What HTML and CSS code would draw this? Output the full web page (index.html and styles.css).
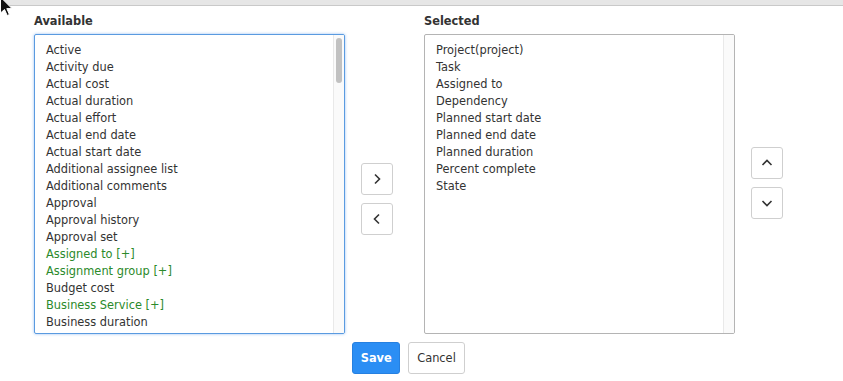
FILE: index.html
```html
<!DOCTYPE html>
<html>
  <head>
    <title>Column picker</title>
    <link rel="stylesheet" href="styles.css">
  </head>
  <body>
    <div class="topbar"></div>
    <svg class="cursor" width="14" height="18" viewBox="0 0 14 18">
      <path d="M0.5 -3 L0.5 13 L4.5 9.5 L7.2 15.5 L9.4 14.5 L6.8 8.6 L12 8.6 Z" fill="#111" stroke="#fff" stroke-width="1"/>
    </svg>

    <div class="picker">
      <div class="lists">
        <div class="column">
          <div class="label">Available</div>
          <div class="listbox focused">
            <div class="items">
              <div class="item">Active</div>
              <div class="item">Activity due</div>
              <div class="item">Actual cost</div>
              <div class="item">Actual duration</div>
              <div class="item">Actual effort</div>
              <div class="item">Actual end date</div>
              <div class="item">Actual start date</div>
              <div class="item">Additional assignee list</div>
              <div class="item">Additional comments</div>
              <div class="item">Approval</div>
              <div class="item">Approval history</div>
              <div class="item">Approval set</div>
              <div class="item ref">Assigned to [+]</div>
              <div class="item ref">Assignment group [+]</div>
              <div class="item">Budget cost</div>
              <div class="item ref">Business Service [+]</div>
              <div class="item">Business duration</div>
            </div>
            <div class="scrollbar">
              <div class="thumb"></div>
            </div>
          </div>
        </div>

        <div class="movers">
          <button class="icon-btn" title="Add">
            <svg width="12" height="12" viewBox="0 0 12 12"><path d="M4 1.5 L8.5 6 L4 10.5" /></svg>
          </button>
          <button class="icon-btn" title="Remove">
            <svg width="12" height="12" viewBox="0 0 12 12"><path d="M8 1.5 L3.5 6 L8 10.5" /></svg>
          </button>
        </div>

        <div class="column">
          <div class="label">Selected</div>
          <div class="listbox">
            <div class="items">
              <div class="item">Project(project)</div>
              <div class="item">Task</div>
              <div class="item">Assigned to</div>
              <div class="item">Dependency</div>
              <div class="item">Planned start date</div>
              <div class="item">Planned end date</div>
              <div class="item">Planned duration</div>
              <div class="item">Percent complete</div>
              <div class="item">State</div>
            </div>
            <div class="scrollbar"></div>
          </div>
        </div>

        <div class="order">
          <button class="icon-btn" title="Move up">
            <svg width="12" height="12" viewBox="0 0 12 12"><path d="M1.5 8 L6 3.5 L10.5 8" /></svg>
          </button>
          <button class="icon-btn" title="Move down">
            <svg width="12" height="12" viewBox="0 0 12 12"><path d="M1.5 4 L6 8.5 L10.5 4" /></svg>
          </button>
        </div>
      </div>

      <div class="actions">
        <button class="btn primary">Save</button>
        <button class="btn">Cancel</button>
      </div>
    </div>
  </body>
</html>
```

FILE: styles.css
```css
body {
  margin: 0;
  font-family: "DejaVu Sans", Verdana, sans-serif;
  font-size: 11.4px;
  color: #333;
  background-color: #fff;
}

.topbar {
  height: 5px;
  background-color: #e6e6e6;
  border-bottom: 1px solid #c9c9c9;
}

.cursor {
  position: absolute;
  left: 0;
  top: 0;
}

.picker {
  display: inline-flex;
  flex-direction: column;
  margin-left: 34px;
  margin-top: 7px;
}

.lists {
  display: flex;
}

.column {
  display: flex;
  flex-direction: column;
  width: 311px;
}

.label {
  font-weight: bold;
  line-height: 17px;
  margin-bottom: 4px;
}

.listbox {
  display: flex;
  box-sizing: border-box;
  height: 300px;
  border: 1px solid #b4b4b4;
  border-radius: 2px;
  overflow: hidden;
}

.listbox.focused {
  border-color: #5a9be0;
  box-shadow: 0 0 3px rgba(82, 150, 236, 0.6);
}

.items {
  flex: 1;
  padding: 7px 0 0 11px;
  line-height: 17px;
  overflow: hidden;
}

.item {
  white-space: nowrap;
}

.item.ref {
  color: #2b8a2b;
}

.scrollbar {
  width: 10px;
  background-color: #fafafa;
  border-left: 1px solid #e9e9e9;
}

.thumb {
  width: 6px;
  height: 45px;
  margin: 3px 0 0 2px;
  background-color: #c1c1c1;
  border-radius: 3px;
}

.movers,
.order {
  display: flex;
  flex-direction: column;
  gap: 8px;
  padding-left: 16px;
}

.movers {
  width: 63px;
  padding-top: 150px;
}

.order {
  padding-top: 134px;
}

.icon-btn {
  width: 32px;
  height: 32px;
  padding: 0;
  display: flex;
  justify-content: center;
  align-items: center;
  background-color: #fff;
  border: 1px solid #cfcfcf;
  border-radius: 3px;
  cursor: pointer;
}

.icon-btn svg path {
  fill: none;
  stroke: #333;
  stroke-width: 1.6;
}

.actions {
  display: flex;
  justify-content: center;
  gap: 8px;
  margin-top: 8px;
}

.btn {
  height: 32px;
  padding: 0 8px;
  font-family: "DejaVu Sans", Verdana, sans-serif;
  font-size: 11.4px;
  color: #333;
  background-color: #fff;
  border: 1px solid #cfcfcf;
  border-radius: 3px;
  cursor: pointer;
}

.btn.primary {
  width: 48px;
  padding: 0;
  font-weight: bold;
  color: #fff;
  background-color: #2b8ef4;
  border-color: #2680e0;
}
```
